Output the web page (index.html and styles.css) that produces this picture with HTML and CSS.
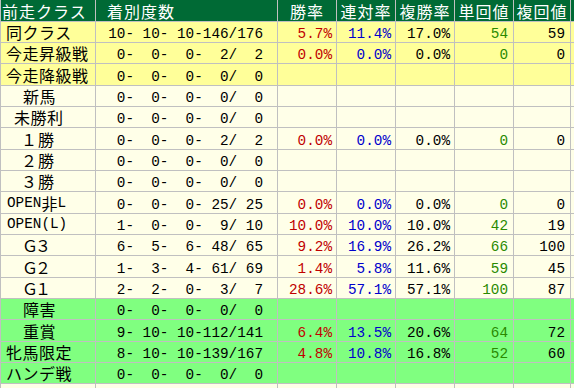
FILE: index.html
```html
<!DOCTYPE html>
<html lang="ja">
<head>
<meta charset="utf-8">
<title>前走クラス別成績</title>
<link rel="stylesheet" href="styles.css">
</head>
<body>
<div class="table">
  <div class="row head">
    <div class="c lab">前走クラス</div>
    <div class="c cnt">着別度数</div>
    <div class="c ctr">勝率</div>
    <div class="c ctr">連対率</div>
    <div class="c ctr">複勝率</div>
    <div class="c ctr">単回値</div>
    <div class="c ctr">複回値</div>
    <div class="c"></div>
  </div>

  <div class="row yellow">
    <div class="c lab">同クラス</div>
    <div class="c num cnt"> 10- 10- 10-146/176</div>
    <div class="c num win">5.7%</div>
    <div class="c num ren">11.4%</div>
    <div class="c num fuku">17.0%</div>
    <div class="c num tan">54</div>
    <div class="c num fk">59</div>
    <div class="c"></div>
  </div>
  <div class="row yellow">
    <div class="c lab">今走昇級戦</div>
    <div class="c num cnt">  0-  0-  0-  2/  2</div>
    <div class="c num win">0.0%</div>
    <div class="c num ren">0.0%</div>
    <div class="c num fuku">0.0%</div>
    <div class="c num tan">0</div>
    <div class="c num fk">0</div>
    <div class="c"></div>
  </div>
  <div class="row yellow">
    <div class="c lab">今走降級戦</div>
    <div class="c num cnt">  0-  0-  0-  0/  0</div>
    <div class="c"></div><div class="c"></div><div class="c"></div><div class="c"></div><div class="c"></div><div class="c"></div>
  </div>

  <div class="row cream">
    <div class="c lab in2">新馬</div>
    <div class="c num cnt">  0-  0-  0-  0/  0</div>
    <div class="c"></div><div class="c"></div><div class="c"></div><div class="c"></div><div class="c"></div><div class="c"></div>
  </div>
  <div class="row cream">
    <div class="c lab in1">未勝利</div>
    <div class="c num cnt">  0-  0-  0-  0/  0</div>
    <div class="c"></div><div class="c"></div><div class="c"></div><div class="c"></div><div class="c"></div><div class="c"></div>
  </div>
  <div class="row cream">
    <div class="c lab inw">１勝</div>
    <div class="c num cnt">  0-  0-  0-  2/  2</div>
    <div class="c num win">0.0%</div>
    <div class="c num ren">0.0%</div>
    <div class="c num fuku">0.0%</div>
    <div class="c num tan">0</div>
    <div class="c num fk">0</div>
    <div class="c"></div>
  </div>
  <div class="row cream">
    <div class="c lab inw">２勝</div>
    <div class="c num cnt">  0-  0-  0-  0/  0</div>
    <div class="c"></div><div class="c"></div><div class="c"></div><div class="c"></div><div class="c"></div><div class="c"></div>
  </div>
  <div class="row cream">
    <div class="c lab inw">３勝</div>
    <div class="c num cnt">  0-  0-  0-  0/  0</div>
    <div class="c"></div><div class="c"></div><div class="c"></div><div class="c"></div><div class="c"></div><div class="c"></div>
  </div>
  <div class="row cream">
    <div class="c lab lat"><span class="mono">OPEN</span>非<span class="mono">L</span></div>
    <div class="c num cnt">  0-  0-  0- 25/ 25</div>
    <div class="c num win">0.0%</div>
    <div class="c num ren">0.0%</div>
    <div class="c num fuku">0.0%</div>
    <div class="c num tan">0</div>
    <div class="c num fk">0</div>
    <div class="c"></div>
  </div>
  <div class="row cream">
    <div class="c lab lat"><span class="mono">OPEN(L)</span></div>
    <div class="c num cnt">  1-  0-  0-  9/ 10</div>
    <div class="c num win">10.0%</div>
    <div class="c num ren">10.0%</div>
    <div class="c num fuku">10.0%</div>
    <div class="c num tan">42</div>
    <div class="c num fk">19</div>
    <div class="c"></div>
  </div>
  <div class="row cream">
    <div class="c lab ing">Ｇ３</div>
    <div class="c num cnt">  6-  5-  6- 48/ 65</div>
    <div class="c num win">9.2%</div>
    <div class="c num ren">16.9%</div>
    <div class="c num fuku">26.2%</div>
    <div class="c num tan">66</div>
    <div class="c num fk">100</div>
    <div class="c"></div>
  </div>
  <div class="row cream">
    <div class="c lab ing">Ｇ２</div>
    <div class="c num cnt">  1-  3-  4- 61/ 69</div>
    <div class="c num win">1.4%</div>
    <div class="c num ren">5.8%</div>
    <div class="c num fuku">11.6%</div>
    <div class="c num tan">59</div>
    <div class="c num fk">45</div>
    <div class="c"></div>
  </div>
  <div class="row cream">
    <div class="c lab ing">Ｇ１</div>
    <div class="c num cnt">  2-  2-  0-  3/  7</div>
    <div class="c num win">28.6%</div>
    <div class="c num ren">57.1%</div>
    <div class="c num fuku">57.1%</div>
    <div class="c num tan">100</div>
    <div class="c num fk">87</div>
    <div class="c"></div>
  </div>

  <div class="row green">
    <div class="c lab in2">障害</div>
    <div class="c num cnt">  0-  0-  0-  0/  0</div>
    <div class="c"></div><div class="c"></div><div class="c"></div><div class="c"></div><div class="c"></div><div class="c"></div>
  </div>
  <div class="row green">
    <div class="c lab in2">重賞</div>
    <div class="c num cnt">  9- 10- 10-112/141</div>
    <div class="c num win">6.4%</div>
    <div class="c num ren">13.5%</div>
    <div class="c num fuku">20.6%</div>
    <div class="c num tan">64</div>
    <div class="c num fk">72</div>
    <div class="c"></div>
  </div>
  <div class="row green">
    <div class="c lab">牝馬限定</div>
    <div class="c num cnt">  8- 10- 10-139/167</div>
    <div class="c num win">4.8%</div>
    <div class="c num ren">10.8%</div>
    <div class="c num fuku">16.8%</div>
    <div class="c num tan">52</div>
    <div class="c num fk">60</div>
    <div class="c"></div>
  </div>
  <div class="row green">
    <div class="c lab">ハンデ戦</div>
    <div class="c num cnt">  0-  0-  0-  0/  0</div>
    <div class="c"></div><div class="c"></div><div class="c"></div><div class="c"></div><div class="c"></div><div class="c"></div>
  </div>
  <div class="row cream">
    <div class="c lab in2">定量</div>
    <div class="c num cnt">  0-  0-  0-  0/  0</div>
    <div class="c"></div><div class="c"></div><div class="c"></div><div class="c"></div><div class="c"></div><div class="c"></div>
  </div>
</div>
</body>
</html>
```

FILE: styles.css
```css
html, body {
  margin: 0;
  padding: 0;
  background: #ffffff;
  overflow: hidden;
}

body {
  font-family: "Noto Sans CJK JP", "Noto Sans CJK SC", sans-serif;
  font-size: 16px;
  color: #000;
}

.table {
  display: flex;
  flex-direction: column;
  gap: 1px;
  width: max-content;
  padding-left: 1px;
  background: #c0c0c0;
}

.row {
  display: grid;
  grid-template-columns: 94px 181px 58px 58px 58px 58px 56px 3px;
  grid-template-rows: minmax(0, 1fr);
  column-gap: 1px;
  height: 20px;
  flex: none;
}

/* every third data row is one pixel taller (row pitch ≈ 21.3px) */
.row:nth-child(3n+4) {
  height: 21px;
}

.row.head {
  height: 21px;
}

.c {
  display: flex;
  align-items: center;
  min-height: 0;
  white-space: pre;
  line-height: 20px;
}

.head .c {
  background: #006a35;
  color: #ffffff;
  letter-spacing: 1px;
}

.yellow .c { background: #ffff99; }
.cream .c { background: #ffffe8; }
.green .c { background: #80ff80; }

.lab {
  padding-left: 5px;
  letter-spacing: 0.5px;
}

.head .lab { padding-left: 1px; }

.lab.in1 { padding-left: 13px; }
.lab.in2 { padding-left: 22px; }
.lab.inw { padding-left: 20px; letter-spacing: 1px; }
.lab.ing { padding-left: 21px; letter-spacing: -3px; }
.lab.lat { padding-left: 6px; letter-spacing: 0; }

.mono {
  font-family: "Liberation Mono", "DejaVu Sans Mono", monospace;
  font-size: 14.33px;
}

.head .cnt {
  padding-left: 11px;
}

.ctr {
  justify-content: center;
}

.num {
  font-family: "Liberation Mono", "DejaVu Sans Mono", monospace;
  font-size: 14.33px;
  justify-content: flex-end;
  padding-right: 4px;
  padding-top: 4px;
  line-height: 16px;
}

.num.cnt {
  padding-right: 14px;
}

.num.tan, .num.fk {
  padding-right: 5px;
}

.win { color: #c00000; }
.ren { color: #0000cc; }
.fuku { color: #000000; }
.tan { color: #2a8a00; }
.fk { color: #000000; }
```
